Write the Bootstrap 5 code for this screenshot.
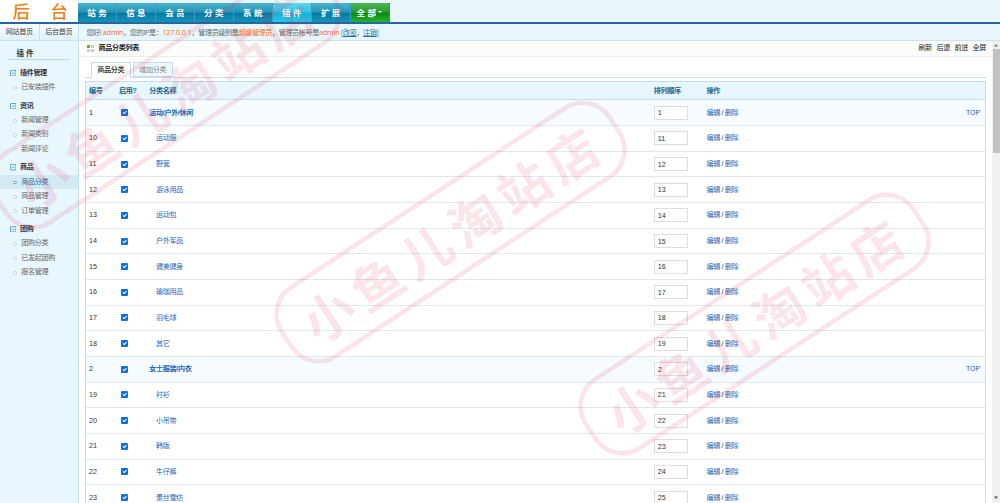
<!DOCTYPE html>
<html lang="zh-CN">
<head>
<meta charset="utf-8">
<title>后台 - 商品分类列表</title>
<link href="https://cdn.jsdelivr.net/npm/bootstrap@5.3.0/dist/css/bootstrap.min.css" rel="stylesheet">
<style>
html,body{height:503px;overflow:hidden}
body{font:7.1px/10px "Liberation Sans","Noto Sans CJK SC",sans-serif;color:#333;background:#fff;letter-spacing:-.35px}
a{text-decoration:none;color:#2366b8}
.topbar{height:24px;background:#e8f6fb;border-bottom:2px solid #2467a3}
.brand{width:78px;background:#fff;color:#f57f17;font-size:17.5px;line-height:24px;font-weight:500;padding-left:12.5px;gap:20.5px;letter-spacing:0}
.mainmenu{margin-top:3px;height:19px}
.mainmenu a{width:38.95px;color:#fff;font-size:8.5px;font-weight:700;line-height:20px;letter-spacing:0;background:linear-gradient(#4db3cf 0,#2495b9 48%,#0779a5 52%,#1693b9 100%);border-right:1px solid #3a9ebf;text-align:center}
.mainmenu a.active{background:linear-gradient(#62d5ed 0,#35c2e4 48%,#12afd8 52%,#2acbe9 100%)}
.mainmenu a.all{background:linear-gradient(#52b457 0,#289c2e 48%,#078611 52%,#29b42c 100%);border-color:#2c9b3b}
.caret-s{border:2px solid transparent;border-top-color:#fff;margin-left:2.5px;margin-top:1px}
.subbar{height:17px;background:#e8f6fb;border-bottom:1px solid #cde4ee}
.homes{width:79px;background:linear-gradient(#f7fcfe,#dff1f9);border-right:1px solid #c5dfeb}
.homes a{color:#444;width:39px;text-align:center;line-height:16px}
.homes a+a{border-left:1px solid #c5dfeb;width:40px}
.hello{padding-left:7.4px;line-height:16px;font-family:"Open Sans","Noto Sans CJK SC",sans-serif;color:#666;letter-spacing:-.39px}
.hello b{font-weight:400;color:#ff6b1a}
.hello b.lat{font-size:7.2px;letter-spacing:-.13px}
.hello a{text-decoration:underline;color:#24709c}
.side{width:79px;background:#e8f6fe;border-right:1px solid #c2dfeb;color:#666}
.side h1{font-size:7.5px;height:18.6px;margin:0 8px 6.2px;padding:4.5px 0 0 8.5px;color:#333;border-bottom:1px solid #b9d9e8;font-weight:700;line-height:15px;letter-spacing:-.1px}
.side section{margin-bottom:4.1px}
.side h2{font-size:7.1px;line-height:14.4px;font-weight:700;color:#333;margin:0;padding-left:9.5px;gap:4px}
.side li{line-height:14.4px;height:14.4px;padding-left:13px;gap:4.5px}
.side li i{width:3.8px;height:3.8px;border:1px solid #c5d0d5;border-radius:50%;background:#fff;margin-top:1px}
.side li.active{background:#d3eaf5;color:#24709c}
.side li.active i{border-color:#5b9fc0}
.side svg{width:6.4px;height:6.4px}
.titlebar{height:16px;background:#fafdfc;border-bottom:1px solid #ececec;padding:0 6px 0 7.5px;color:#222;line-height:14px}
.titlebar strong{margin-left:5px}
.titlebar a{color:#222}
.titlebar svg{margin-top:2.5px}
.tools{gap:4.5px}
.tabrow{margin:5px 6px 0 6px;padding-left:6px;height:16px;border-bottom:1px solid #c4dfeb;gap:2.4px}
.tabrow a{border:1px solid #c4dfeb;height:15px;width:39.6px;line-height:14px;text-align:center;background:#edf7fd;color:#888}
.tabrow a.active{height:16px;background:#fff;color:#222;border-bottom:0;font-weight:500}
.list{margin:3px 6px 0 6px;border:1px solid #c4dfeb;border-bottom:0;border-right-width:1.5px}
.line{display:grid;grid-template-columns:30px 30.3px 504.5px 52.6px 1fr auto;align-items:center;height:25.67px;padding:0 5px 0 3px;border-bottom:1px solid #dce9f2;background:#fff}
.line.head{height:18.4px;background:#e8f6fe;color:#1d668d;font-weight:700;border-color:#c4dfeb}
.line.parent{background:#f5fbff}
.line.parent .nm{font-weight:700}
.line:not(.parent) .nm{padding-left:6.6px}
.line .num{letter-spacing:0;font-size:7.2px}
.line .top{letter-spacing:0;font-size:6.9px}
.line .form-check-input{width:7px;height:7px;margin:0 0 0 2.4px;border-radius:1px;display:block;background-size:7px;border:0;background-color:#0b72dd}
.line .form-control{width:34.5px;height:14px;font-size:7.2px;letter-spacing:0;line-height:10px;padding:0 3px;border:1px solid #ddd;border-radius:0;color:#333;background:#fff}
.bar{width:8px;background:#f0f0f0}
.bar svg{width:8px;height:8px}
.thumb{height:104px;width:7px;background:#c1c1c1}
.stamps{inset:0;width:1000px;height:503px;pointer-events:none}
</style>
</head>
<body class="d-flex flex-column position-relative">
<header class="topbar d-flex flex-shrink-0">
<div class="brand d-flex"><span>后</span><span>台</span></div>
<nav class="mainmenu d-flex">
<a href="#">站 务</a><a href="#">信 息</a><a href="#">会 员</a><a href="#">分 类</a><a href="#">系 统</a><a href="#" class="active">插 件</a><a href="#">扩 展</a><a href="#" class="all d-flex justify-content-center align-items-center">全 部<span class="caret-s"></span></a>
</nav>
</header>
<div class="subbar d-flex flex-shrink-0">
<div class="homes d-flex"><a href="#">网站首页</a><a href="#">后台首页</a></div>
<div class="hello text-nowrap">您好! <b class="lat">admin</b>。您的IP是：<b class="lat">127.0.0.1</b>，管理员级别是<b>超级管理员</b>，管理员帐号是<b class="lat">admin</b> [<a href="#">改密</a>，<a href="#">注销</a>]</div>
</div>
<div class="d-flex flex-grow-1 overflow-hidden">
<aside class="side flex-shrink-0"><h1>插 件</h1><div id="menu"></div></aside>
<main class="flex-grow-1">
<div class="titlebar d-flex justify-content-between">
<div class="d-flex"><svg width="7" height="8" viewBox="0 0 7 8"><path fill="#7aa51b" d="M0 1h3v3H0z"/><path fill="#c5cdbd" d="M4 1h3v3H4zM0 5h3v3H0zM4 5h3v3H4z"/></svg><strong>商品分类列表</strong></div>
<div class="tools d-flex"><a href="#">刷新</a><a href="#">后退</a><a href="#">前进</a><a href="#">全屏</a></div>
</div>
<div class="tabrow d-flex"><a href="#" class="active">商品分类</a><a href="#">增加分类</a></div>
<div class="list" id="list"><div class="line head"><span>编号</span><span>启用?</span><span>分类名称</span><span>排列顺序</span><span>操作</span><span></span></div></div>
</main>
<div class="bar d-flex flex-column align-items-end flex-shrink-0">
<svg viewBox="0 0 8 8"><path fill="#777" d="M2 5.500 4 3l2 2.500z"/></svg>
<div class="thumb"></div>
<svg class="mt-auto" viewBox="0 0 8 8"><path fill="#555" d="M2 1.500h4L4 4z"/></svg>
</div>
</div>
<svg class="stamps position-absolute" viewBox="0 0 1000 503">
<defs><g id="stamp"><rect x="-195.800" y="-41" width="391.600" height="82" rx="32" fill="none" stroke="#dc1e3c" stroke-width="4.600"/><text x="-173" y="22.500" font-size="51" font-weight="700" letter-spacing="7.200" fill="#dc1e3c" font-family="Noto Sans CJK SC, sans-serif">小鱼儿淘站店</text></g></defs>
<use href="#stamp" opacity=".11" transform="translate(165 98) rotate(-33.200)"/>
<use href="#stamp" opacity=".11" transform="translate(450.500 232) rotate(-33.200)"/>
<use href="#stamp" opacity=".11" transform="translate(754.500 324) rotate(-33.200)"/>
</svg>
<script src="https://cdn.jsdelivr.net/npm/bootstrap@5.3.0/dist/js/bootstrap.bundle.min.js"></script>
<script>
const groups = [['插件管理',['已安装插件']],['资讯',['新闻管理','新闻类别','新闻评论']],['商品',['商品分类','商品管理','订单管理']],['团购',['团购分类','已发起团购','报名管理']]];
document.getElementById('menu').innerHTML = groups.map(([t, items]) => `<section><h2 class="d-flex align-items-center"><svg viewBox="0 0 7 7"><path d="M.5.5h6v6h-6zM2 3.500h3" fill="#e4f3fb" stroke="#5aa0cc"/></svg>${t}</h2><ul class="list-unstyled mb-0">${items.map(i => `<li class="d-flex align-items-center${i === '商品分类' ? ' active' : ''}"><i></i>${i}</li>`).join('')}</ul></section>`).join('');
const rows = [[1,'运动/户外/休闲',1,1],[10,'运动服',11],[11,'野营',12],[12,'游泳用品',13],[13,'运动包',14],[14,'户外军品',15],[15,'健美健身',16],[16,'瑜珈用品',17],[17,'羽毛球',18],[18,'其它',19],[2,'女士服装/内衣',2,1],[19,'衬衫',21],[20,'小吊带',22],[21,'韩版',23],[22,'牛仔裤',24],[23,'蕾丝雪纺',25]];
document.getElementById('list').insertAdjacentHTML('beforeend', rows.map(([id, name, order, top]) => `<div class="line${top ? ' parent' : ''}"><span class="num">${id}</span><input type="checkbox" class="form-check-input" checked><a href="#" class="nm">${name}</a><input class="form-control" value="${order}"><span><a href="#">编辑</a> / <a href="#">删除</a></span>${top ? '<a href="#" class="top">TOP</a>' : '<span></span>'}</div>`).join(''));
</script>
</body>
</html>
